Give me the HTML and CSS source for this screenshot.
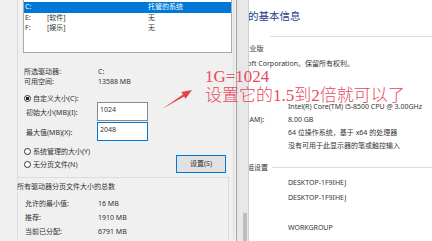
FILE: index.html
```html
<!DOCTYPE html>
<html lang="zh-CN">
<head>
  <meta charset="UTF-8" />
  <title>虚拟内存</title>
  <link rel="stylesheet" href="styles.css">
</head>
<body>
<div class="screen">

  <div class="dialog">
    <div class="vm">
      <div class="listbox">
        <div class="drive sel"><span>C:</span><span></span><span>托管的系统</span></div>
        <div class="drive"><span>E:</span><span>[软件]</span><span>无</span></div>
        <div class="drive"><span>F:</span><span>[娱乐]</span><span>无</span></div>
      </div>

      <div class="info">
        <span>所选驱动器:</span><span>C:</span>
        <span>可用空间:</span><span>13588 MB</span>
      </div>

      <div class="radio radio-custom checked"><i></i>自定义大小(C):</div>
      <div class="sizes">
        <span>初始大小(MB)(I):</span><div class="edit">1024</div>
        <span>最大值(MB)(X):</span><div class="edit focus">2048</div>
      </div>

      <div class="lower">
        <div class="radios">
          <div class="radio"><i></i>系统管理的大小(Y)</div>
          <div class="radio"><i></i>无分页文件(N)</div>
        </div>
        <div class="btn">设置(S)</div>
      </div>

      <div class="total">
        <div class="total-title">所有驱动器分页文件大小的总数</div>
        <div class="total-rows">
          <span>允许的最小值:</span><span>16 MB</span>
          <span>推荐:</span><span>1910 MB</span>
          <span>当前已分配:</span><span>6791 MB</span>
        </div>
      </div>
    </div>
  </div>

  <div class="edge"><div class="thumb"></div></div>

  <div class="sys">
    <div class="sys-inner">
      <div class="sys-title">查看有关计算机的基本信息</div>
      <div class="rule"></div>
      <div class="row edition">Windows 10 专业版</div>
      <div class="row copy">© 2019 Microsoft Corporation。保留所有权利。</div>

      <div class="rows hw">
        <span>处理器:</span><span>Intel(R) Core(TM) i5-8500 CPU @ 3.00GHz</span>
        <span>安装的内存(RAM):</span><span>8.00 GB</span>
        <span>系统类型:</span><span>64 位操作系统，基于 x64 的处理器</span>
        <span>笔和触控:</span><span>没有可用于此显示器的笔或触控输入</span>
      </div>

      <div class="section"><span>计算机名、域和工作组设置</span><div class="line"></div></div>
      <div class="rows names">
        <span>计算机名:</span><span>DESKTOP-1F9IHEJ</span>
        <span>计算机全名:</span><span>DESKTOP-1F9IHEJ</span>
        <span>计算机描述:</span><span></span>
        <span>工作组:</span><span>WORKGROUP</span>
      </div>
    </div>
  </div>

  <div class="note">1G=1024<br>设置它的1.5到2倍就可以了</div>
  <svg class="arrow" width="432" height="241" viewBox="0 0 432 241">
    <polygon points="162,109 182.9,94.4 181.4,92 192,90 185.6,98.7 184.1,96.4" fill="#e8404f"/>
  </svg>

</div>
</body>
</html>
```

FILE: styles.css
```css
body {
  margin: 0;
}
.screen {
  position: relative;
  display: flex;
  width: 432px;
  height: 241px;
  overflow: hidden;
  font-family: "Noto Sans", "Noto Sans CJK SC", sans-serif;
  font-size: 7px;
  color: #333;
  background: #fff;
}

/* virtual memory dialog */
.dialog {
  flex: none;
  width: 236px;
  height: 241px;
  padding-left: 17px;
  box-sizing: border-box;
  background: #f0f0f0;
}
.vm {
  width: 217px;
  height: 241px;
  box-sizing: border-box;
  padding-left: 5px;
  border-left: 1px solid #dcdcdc;
  border-right: 1px solid #dcdcdc;
}
.listbox {
  width: 209px;
  height: 55px;
  margin-top: -2px;
  padding-top: 3px;
  box-sizing: border-box;
  background: #fff;
  border: 1px solid #a9a9a9;
}
.drive {
  display: grid;
  grid-template-columns: 22px 101px 1fr;
  padding-left: 1px;
  height: 10.5px;
  line-height: 10.5px;
}
.drive.sel {
  background: #0078d7;
  color: #fff;
}
.info {
  display: grid;
  grid-template-columns: 74px 1fr;
  grid-auto-rows: 10px;
  line-height: 10px;
  margin-top: 14px;
  padding-left: 1px;
}
.radio {
  display: flex;
  align-items: center;
  gap: 2px;
  height: 12px;
  padding-left: 1px;
}
.radio i {
  width: 7px;
  height: 7px;
  box-sizing: border-box;
  border: 1px solid #333;
  border-radius: 50%;
  background: #fff;
}
.radio.checked i {
  background: radial-gradient(circle, #222 0 1.6px, #fff 2px);
}
.radio-custom {
  height: 8px;
  margin-top: 7px;
}
.sizes {
  display: grid;
  grid-template-columns: 71px 51px;
  grid-auto-rows: 19px;
  row-gap: 1px;
  align-items: center;
  padding-left: 3px;
}
.edit {
  height: 19px;
  box-sizing: border-box;
  padding: 2px 0 0 2px;
  line-height: 10px;
  background: #fff;
  border: 1px solid #8a8a8a;
}
.edit.focus {
  border-color: #0078d7;
}
.lower {
  display: flex;
  justify-content: space-between;
  align-items: flex-end;
  height: 32px;
}
.radios {
  display: flex;
  flex-direction: column;
  gap: 1px;
  padding-bottom: 3px;
}
.btn {
  width: 50px;
  height: 18px;
  margin-right: 7px;
  box-sizing: border-box;
  border: 1px solid #0078d7;
  background: #e1e1e1;
  text-align: center;
  line-height: 16px;
}
.total {
  width: 211px;
  height: 64px;
  margin: 4px 0 0 -5px;
  box-sizing: border-box;
  border-top: 1px solid #dcdcdc;
  border-right: 1px solid #dcdcdc;
}
.total-title {
  margin: 4px 0 0 -1px;
  line-height: 10px;
  background: #f0f0f0;
}
.total-rows {
  display: grid;
  grid-template-columns: 73px 1fr;
  grid-auto-rows: 14px;
  line-height: 14px;
  margin-top: 5px;
  padding-left: 7px;
}

/* window edge between dialog and control panel */
.edge {
  flex: none;
  display: flex;
  flex-direction: column;
  justify-content: flex-end;
  width: 13px;
  box-sizing: border-box;
  background: #e8e8e8;
  border-left: 1px solid #a3a3a3;
  border-right: 1px solid #cfcfcf;
}
.thumb {
  width: 4px;
  height: 28px;
  margin-left: 6px;
  background: #bdbdbd;
}

/* system page behind */
.sys {
  flex: 1;
  overflow: hidden;
  background: #fff;
}
.sys-inner {
  margin-left: -41px;
}
.sys-title {
  margin: 10px 0 0 -33.5px;
  font-size: 10.5px;
  line-height: 12px;
  color: #1e3c8c;
  white-space: nowrap;
}
.rule {
  height: 1px;
  margin: 14px 0 0 62px;
  background: #dcdcdc;
}
.row {
  height: 12px;
  line-height: 12px;
  white-space: nowrap;
}
.edition {
  margin-top: 6px;
  text-indent: -7px;
}
.copy {
  margin-top: 3px;
  text-indent: -8px;
}
.rows {
  display: grid;
  grid-template-columns: 80px 1fr;
  white-space: nowrap;
}
.hw {
  margin-top: 30px;
  grid-auto-rows: 13px;
  line-height: 13px;
}
.section {
  display: flex;
  align-items: center;
  height: 12px;
  margin: 9px 0 0 -24px;
  white-space: nowrap;
}
.section .line {
  flex: 1;
  height: 1px;
  margin-left: 4px;
  background: #dcdcdc;
}
.names {
  margin-top: 2px;
  grid-auto-rows: 15px;
  line-height: 15px;
}

/* red annotation drawn on the screenshot */
.note {
  position: absolute;
  left: 205px;
  top: 67px;
  font-family: "Liberation Serif", "Noto Sans CJK SC", serif;
  font-size: 17px;
  font-weight: 300;
  line-height: 19px;
  color: #e84a5f;
  white-space: nowrap;
}
.arrow {
  position: absolute;
  left: 0;
  top: 0;
}
```
